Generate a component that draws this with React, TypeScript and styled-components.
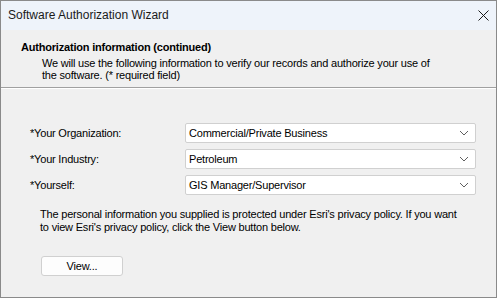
import { createGlobalStyle, styled } from "styled-components";

const GlobalStyle = createGlobalStyle`
  html, body {
    margin: 0;
    padding: 0;
    background: #f0f0f0;
  }
  * {
    box-sizing: border-box;
  }
`;

const fields = [
  { label: "*Your Organization:", value: "Commercial/Private Business" },
  { label: "*Your Industry:", value: "Petroleum" },
  { label: "*Yourself:", value: "GIS Manager/Supervisor" },
];

function Chevron() {
  return (
    <svg width="10" height="6" viewBox="0 0 10 6">
      <path d="M1 1 L5 5 L9 1" fill="none" stroke="#606060" strokeWidth="1" />
    </svg>
  );
}

function CloseIcon() {
  return (
    <svg width="11" height="11" viewBox="0 0 11 11">
      <path d="M0.5 0.5 L10.5 10.5 M10.5 0.5 L0.5 10.5" stroke="#1a1a1a" strokeWidth="1" />
    </svg>
  );
}

export default function App() {
  return (
    <>
      <GlobalStyle />
      <Window>
        <TitleBar>
          <Title>Software Authorization Wizard</Title>
          <CloseButton>
            <CloseIcon />
          </CloseButton>
        </TitleBar>
        <Header>
          <HeaderTitle>Authorization information (continued)</HeaderTitle>
          <HeaderText>
            We will use the following information to verify our records and authorize your use of
            <br />
            the software. (* required field)
          </HeaderText>
        </Header>
        <Body>
          <Form>
            {fields.map((f) => (
              <Row key={f.label}>
                <Label>{f.label}</Label>
                <Select>
                  <span>{f.value}</span>
                  <Chevron />
                </Select>
              </Row>
            ))}
          </Form>
          <Notice>
            The personal information you supplied is protected under Esri's privacy policy. If you want
            <br />
            to view Esri's privacy policy, click the View button below.
          </Notice>
          <Button>View...</Button>
        </Body>
      </Window>
    </>
  );
}

const Window = styled.div`
  width: 497px;
  height: 298px;
  border: 1px solid #8a8a8a;
  background: #f0f0f0;
  display: flex;
  flex-direction: column;
  font-family: "Liberation Sans", Arial, sans-serif;
  font-size: 11px;
  letter-spacing: -0.2px;
  color: #000;
  overflow: hidden;
`;

const TitleBar = styled.div`
  height: 29px;
  flex: none;
  background: #eef3fa;
  display: flex;
  align-items: center;
  justify-content: space-between;
  padding: 0 7px 1px 7px;
`;

const Title = styled.div`
  font-family: "Liberation Sans", Arial, sans-serif;
  font-size: 12px;
  letter-spacing: 0;
  color: #1a1a1a;
`;

const CloseButton = styled.div`
  width: 11px;
  height: 11px;
  display: flex;
`;

const Header = styled.div`
  flex: none;
  height: 58px;
  padding: 11px 0 0 20px;
  border-bottom: 1px solid #a0a0a0;
  box-shadow: 0 1px 0 #ffffff;
`;

const HeaderTitle = styled.div`
  font-weight: bold;
  font-size: 11px;
  line-height: 13px;
`;

const HeaderText = styled.div`
  padding-left: 21px;
  margin-top: 3px;
  line-height: 12px;
  white-space: nowrap;
`;

const Body = styled.div`
  flex: 1;
  padding: 35px 20px 0 29px;
  display: flex;
  flex-direction: column;
`;

const Form = styled.div`
  display: flex;
  flex-direction: column;
  gap: 6px;
`;

const Row = styled.div`
  display: grid;
  grid-template-columns: 155px 291px;
  align-items: center;
`;

const Label = styled.div`
  line-height: 13px;
`;

const Select = styled.div`
  height: 20px;
  background: #ffffff;
  border: 1px solid #d0d0d0;
  border-radius: 2px;
  display: flex;
  align-items: center;
  justify-content: space-between;
  padding: 0 6px 0 3px;
`;

const Notice = styled.div`
  margin: 13px 0 0 10px;
  line-height: 13px;
  white-space: nowrap;
`;

const Button = styled.button`
  margin: 22px 0 0 11px;
  width: 82px;
  height: 20px;
  background: #fdfdfd;
  border: 1px solid #d0d0d0;
  border-radius: 3px;
  font-family: "Liberation Sans", Arial, sans-serif;
  font-size: 11px;
  letter-spacing: -0.2px;
  color: #000;
  padding: 0;
`;
